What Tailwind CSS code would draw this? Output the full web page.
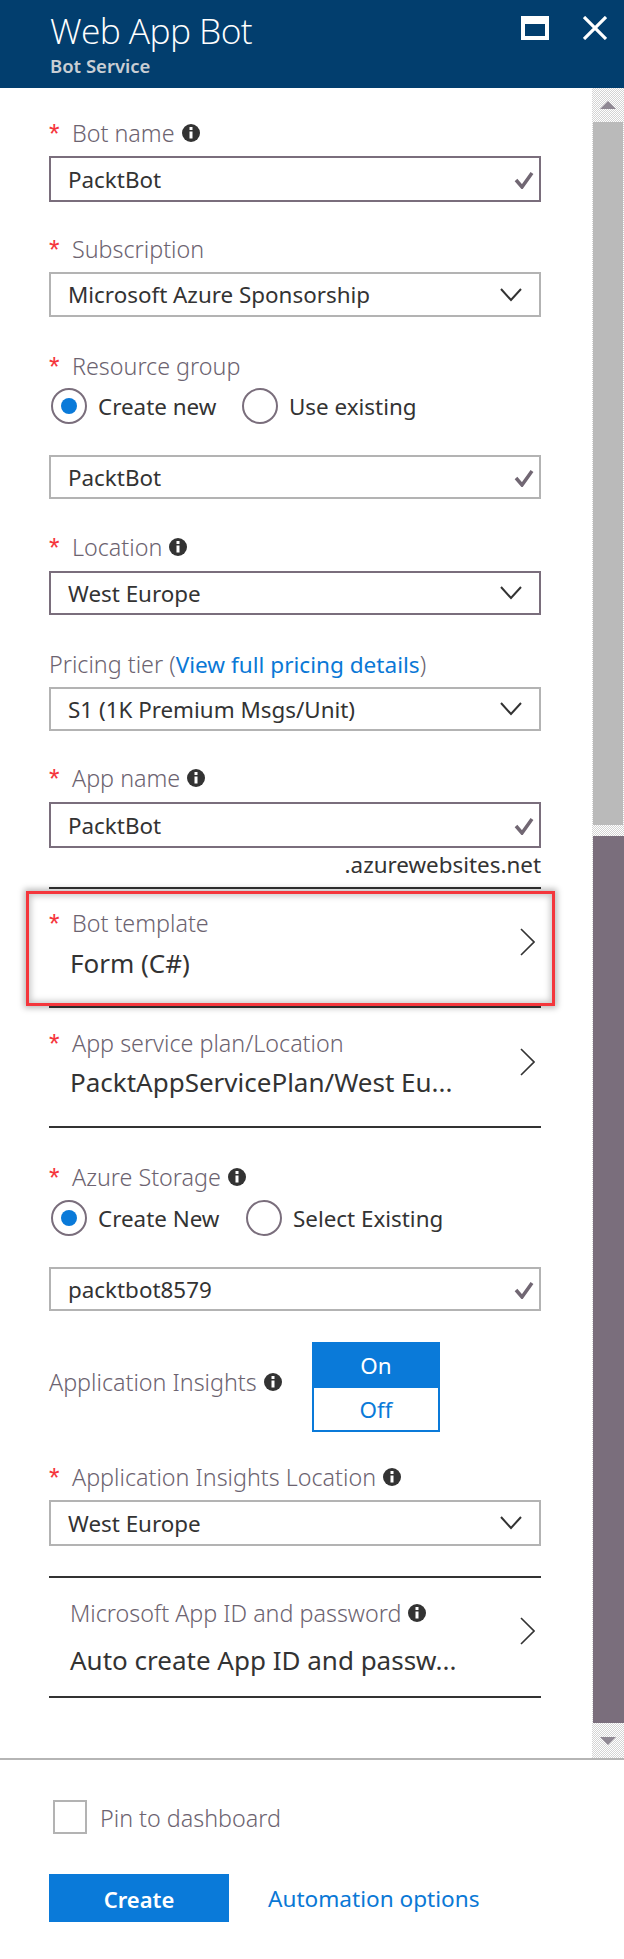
<!DOCTYPE html>
<html lang="en">
<head>
    <meta charset="UTF-8">
    <meta name="viewport" content="width=device-width, initial-scale=1.0">
    <title>Web App Bot</title>
    <script src="https://cdn.jsdelivr.net/npm/@tailwindcss/browser@4"></script>
</head>
<body class="bg-white font-['Noto_Sans',sans-serif] text-[22.4px] text-[#333]">
<div class="w-[624px] h-[1959px] flex flex-col overflow-hidden">

    <!-- Blade header -->
    <header class="h-[88px] shrink-0 bg-[#023e6e] flex items-start pl-[50px] relative">
        <div class="flex-1">
            <h1 class="h-[46px] mt-[7px] text-[35.4px] leading-[46px] font-light text-white font-['Open_Sans',sans-serif] tracking-[-0.6px]">Web App Bot</h1>
            <p class="h-[24px] mt-[1px] text-[18.5px] leading-[24px] font-semibold text-[#c9ced4]">Bot Service</p>
        </div>
        <div class="w-[28px] h-[24px] mt-[16px] border-x-4 border-b-4 border-t-8 border-white"></div>
        <svg class="w-[24px] h-[24px] mt-[16px] ml-[34px] mr-[17px]" viewBox="0 0 24 24"><path d="M1 1L23 23M23 1L1 23" stroke="#fff" stroke-width="3.2" fill="none"/></svg>
    </header>

    <div class="h-[1670px] shrink-0 flex">
        <!-- Form -->
        <main class="w-[492px] ml-[49px] pt-[31px]">

            <!-- Bot name -->
            <div class="h-[30px] flex items-center">
                <span class="w-[23px] h-[30px] text-[27px] leading-[30px] text-[#f5353b] font-['Liberation_Sans',sans-serif]">*</span>
                <span class="pb-[1px] text-[23.3px] font-light text-[#6c6370]">Bot name</span>
                <svg class="w-[18px] h-[18px] ml-[7px] -mt-[2px]" viewBox="0 0 18 18"><circle cx="9" cy="9" r="9" fill="#333"/><rect x="7.5" y="3" width="3" height="3" fill="#fff"/><rect x="7.5" y="7.5" width="3" height="7" fill="#fff"/></svg>
            </div>
            <div class="mt-[7px] h-[46px] border-2 border-[#7a6e7c] flex items-center justify-between pl-[17px] pr-[5px]">
                <span class="pt-[1px]">PacktBot</span>
                <svg class="w-[20px] h-[18px] mt-[2px]" viewBox="0 0 20 18"><path d="M2 9L8 16L18 2" stroke="#716773" stroke-width="3.5" fill="none"/></svg>
            </div>

            <!-- Subscription -->
            <div class="mt-[33px] h-[30px] flex items-center">
                <span class="w-[23px] h-[30px] text-[27px] leading-[30px] text-[#f5353b] font-['Liberation_Sans',sans-serif]">*</span>
                <span class="pb-[1px] text-[23.3px] font-light text-[#6c6370]">Subscription</span>
            </div>
            <div class="mt-[7px] h-[45px] border-2 border-[#b3b3b3] flex items-center justify-between pl-[17px] pr-[17px]">
                <span class="pt-[1px]">Microsoft Azure Sponsorship</span>
                <svg class="w-[22px] h-[14px]" viewBox="0 0 22 14"><path d="M1 1L11 12L21 1" stroke="#333" stroke-width="2" fill="none"/></svg>
            </div>

            <!-- Resource group -->
            <div class="mt-[35px] h-[30px] flex items-center">
                <span class="w-[23px] h-[30px] text-[27px] leading-[30px] text-[#f5353b] font-['Liberation_Sans',sans-serif]">*</span>
                <span class="pb-[1px] text-[23.3px] font-light text-[#6c6370]">Resource group</span>
            </div>
            <div class="mt-[6px] h-[36px] flex items-center pl-[2px]">
                <span class="w-[36px] h-[36px] rounded-full border-2 border-[#7a6e7c] flex items-center justify-center"><span class="w-[16px] h-[16px] rounded-full bg-[#0a7ad9]"></span></span>
                <span class="w-[155px] pl-[11px] pt-[1px]">Create new</span>
                <span class="w-[36px] h-[36px] rounded-full border-2 border-[#7a6e7c]"></span>
                <span class="pl-[11px] pt-[1px]">Use existing</span>
            </div>
            <div class="mt-[31px] h-[44px] border-2 border-[#b3b3b3] flex items-center justify-between pl-[17px] pr-[5px]">
                <span class="pt-[1px]">PacktBot</span>
                <svg class="w-[20px] h-[18px] mt-[2px]" viewBox="0 0 20 18"><path d="M2 9L8 16L18 2" stroke="#716773" stroke-width="3.5" fill="none"/></svg>
            </div>

            <!-- Location -->
            <div class="mt-[34px] h-[30px] flex items-center">
                <span class="w-[23px] h-[30px] text-[27px] leading-[30px] text-[#f5353b] font-['Liberation_Sans',sans-serif]">*</span>
                <span class="pb-[1px] text-[23.3px] font-light text-[#6c6370]">Location</span>
                <svg class="w-[18px] h-[18px] ml-[7px] -mt-[2px]" viewBox="0 0 18 18"><circle cx="9" cy="9" r="9" fill="#333"/><rect x="7.5" y="3" width="3" height="3" fill="#fff"/><rect x="7.5" y="7.5" width="3" height="7" fill="#fff"/></svg>
            </div>
            <div class="mt-[8px] h-[44px] border-2 border-[#7a6e7c] flex items-center justify-between pl-[17px] pr-[17px]">
                <span class="pt-[1px]">West Europe</span>
                <svg class="w-[22px] h-[14px]" viewBox="0 0 22 14"><path d="M1 1L11 12L21 1" stroke="#333" stroke-width="2" fill="none"/></svg>
            </div>

            <!-- Pricing tier -->
            <div class="mt-[35px] h-[30px] flex items-center text-[23.3px] font-light text-[#6c6370]">
                <span class="pb-[1px]">Pricing tier (<a class="text-[22.6px] font-normal text-[#0a78d6]">View full pricing details</a>)</span>
            </div>
            <div class="mt-[7px] h-[44px] border-2 border-[#b3b3b3] flex items-center justify-between pl-[17px] pr-[17px]">
                <span class="pt-[1px]">S1 (1K Premium Msgs/Unit)</span>
                <svg class="w-[22px] h-[14px]" viewBox="0 0 22 14"><path d="M1 1L11 12L21 1" stroke="#333" stroke-width="2" fill="none"/></svg>
            </div>

            <!-- App name -->
            <div class="mt-[33px] h-[30px] flex items-center">
                <span class="w-[23px] h-[30px] text-[27px] leading-[30px] text-[#f5353b] font-['Liberation_Sans',sans-serif]">*</span>
                <span class="pb-[1px] text-[23.3px] font-light text-[#6c6370]">App name</span>
                <svg class="w-[18px] h-[18px] ml-[7px] -mt-[2px]" viewBox="0 0 18 18"><circle cx="9" cy="9" r="9" fill="#333"/><rect x="7.5" y="3" width="3" height="3" fill="#fff"/><rect x="7.5" y="7.5" width="3" height="7" fill="#fff"/></svg>
            </div>
            <div class="mt-[8px] h-[46px] border-2 border-[#7a6e7c] flex items-center justify-between pl-[17px] pr-[5px]">
                <span class="pt-[1px]">PacktBot</span>
                <svg class="w-[20px] h-[18px] mt-[2px]" viewBox="0 0 20 18"><path d="M2 9L8 16L18 2" stroke="#716773" stroke-width="3.5" fill="none"/></svg>
            </div>
            <div class="mt-[2px] h-[30px] leading-[30px] text-right">.azurewebsites.net</div>
            <div class="mt-[7px] h-[2px] bg-[#333]"></div>

            <!-- Bot template -->
            <div class="relative h-[119px] border-b-2 border-[#333] flex justify-between">
                <div class="pt-[20px]">
                    <div class="h-[30px] flex items-center">
                        <span class="w-[23px] h-[30px] text-[27px] leading-[30px] text-[#f5353b] font-['Liberation_Sans',sans-serif]">*</span>
                        <span class="pb-[1px] text-[23.3px] font-light text-[#6c6370]">Bot template</span>
                    </div>
                    <div class="mt-[9px] h-[30px] pl-[21px] text-[26px] leading-[30px]">Form (C#)</div>
                </div>
                <svg class="w-[15px] h-[28px] mt-[39px] mr-[6px]" viewBox="0 0 15 28"><path d="M1 1L14 14L1 27" stroke="#333" stroke-width="1.6" fill="none"/></svg>
                <div class="absolute -left-[23px] top-[2px] w-[529px] h-[115px] border-[3px] border-[#f4363c] shadow-[0_0_6px_2px_rgba(0,0,0,0.28),inset_0_0_6px_2px_rgba(0,0,0,0.22)]"></div>
            </div>

            <!-- App service plan -->
            <div class="h-[120px] border-b-2 border-[#333] flex justify-between">
                <div class="pt-[21px]">
                    <div class="h-[30px] flex items-center">
                        <span class="w-[23px] h-[30px] text-[27px] leading-[30px] text-[#f5353b] font-['Liberation_Sans',sans-serif]">*</span>
                        <span class="pb-[1px] text-[23.3px] font-light text-[#6c6370]">App service plan/Location</span>
                    </div>
                    <div class="mt-[8px] h-[30px] pl-[21px] text-[26px] leading-[30px]">PacktAppServicePlan/West Eu...</div>
                </div>
                <svg class="w-[15px] h-[28px] mt-[40px] mr-[6px]" viewBox="0 0 15 28"><path d="M1 1L14 14L1 27" stroke="#333" stroke-width="1.6" fill="none"/></svg>
            </div>

            <!-- Azure Storage -->
            <div class="mt-[35px] h-[30px] flex items-center">
                <span class="w-[23px] h-[30px] text-[27px] leading-[30px] text-[#f5353b] font-['Liberation_Sans',sans-serif]">*</span>
                <span class="pb-[1px] text-[23.3px] font-light text-[#6c6370]">Azure Storage</span>
                <svg class="w-[18px] h-[18px] ml-[7px] -mt-[2px]" viewBox="0 0 18 18"><circle cx="9" cy="9" r="9" fill="#333"/><rect x="7.5" y="3" width="3" height="3" fill="#fff"/><rect x="7.5" y="7.5" width="3" height="7" fill="#fff"/></svg>
            </div>
            <div class="mt-[7px] h-[36px] flex items-center pl-[2px]">
                <span class="w-[36px] h-[36px] rounded-full border-2 border-[#7a6e7c] flex items-center justify-center"><span class="w-[16px] h-[16px] rounded-full bg-[#0a7ad9]"></span></span>
                <span class="w-[159px] pl-[11px] pt-[2px]">Create New</span>
                <span class="w-[36px] h-[36px] rounded-full border-2 border-[#7a6e7c]"></span>
                <span class="pl-[11px] pt-[2px]">Select Existing</span>
            </div>
            <div class="mt-[31px] h-[44px] border-2 border-[#b3b3b3] flex items-center justify-between pl-[17px] pr-[5px]">
                <span class="pt-[1px]">packtbot8579</span>
                <svg class="w-[20px] h-[18px] mt-[2px]" viewBox="0 0 20 18"><path d="M2 9L8 16L18 2" stroke="#716773" stroke-width="3.5" fill="none"/></svg>
            </div>

            <!-- Application Insights -->
            <div class="mt-[31px] h-[90px] flex items-start">
                <div class="w-[263px] mt-[26px] h-[30px] flex items-center">
                    <span class="pb-[1px] text-[23.3px] font-light text-[#6c6370]">Application Insights</span>
                    <svg class="w-[18px] h-[18px] ml-[7px] -mt-[2px]" viewBox="0 0 18 18"><circle cx="9" cy="9" r="9" fill="#333"/><rect x="7.5" y="3" width="3" height="3" fill="#fff"/><rect x="7.5" y="7.5" width="3" height="7" fill="#fff"/></svg>
                </div>
                <div class="w-[128px] h-[90px] border-2 border-[#0a7ad9] flex flex-col text-center">
                    <div class="h-[44px] leading-[44px] bg-[#0a7ad9] text-white">On</div>
                    <div class="flex-1 leading-[44px] text-[#0a7ad9]">Off</div>
                </div>
            </div>

            <!-- Application Insights Location -->
            <div class="mt-[31px] h-[30px] flex items-center">
                <span class="w-[23px] h-[30px] text-[27px] leading-[30px] text-[#f5353b] font-['Liberation_Sans',sans-serif]">*</span>
                <span class="pb-[1px] text-[23.3px] font-light text-[#6c6370]">Application Insights Location</span>
                <svg class="w-[18px] h-[18px] ml-[7px] -mt-[2px]" viewBox="0 0 18 18"><circle cx="9" cy="9" r="9" fill="#333"/><rect x="7.5" y="3" width="3" height="3" fill="#fff"/><rect x="7.5" y="7.5" width="3" height="7" fill="#fff"/></svg>
            </div>
            <div class="mt-[7px] h-[46px] border-2 border-[#b3b3b3] flex items-center justify-between pl-[17px] pr-[17px]">
                <span class="pt-[1px]">West Europe</span>
                <svg class="w-[22px] h-[14px]" viewBox="0 0 22 14"><path d="M1 1L11 12L21 1" stroke="#333" stroke-width="2" fill="none"/></svg>
            </div>
            <div class="mt-[30px] h-[2px] bg-[#333]"></div>

            <!-- App ID -->
            <div class="h-[120px] border-b-2 border-[#333] flex justify-between">
                <div class="pt-[21px] pl-[21px]">
                    <div class="h-[30px] flex items-center">
                        <span class="pb-[1px] text-[23.3px] font-light text-[#6c6370]">Microsoft App ID and password</span>
                        <svg class="w-[18px] h-[18px] ml-[7px] -mt-[2px]" viewBox="0 0 18 18"><circle cx="9" cy="9" r="9" fill="#333"/><rect x="7.5" y="3" width="3" height="3" fill="#fff"/><rect x="7.5" y="7.5" width="3" height="7" fill="#fff"/></svg>
                    </div>
                    <div class="mt-[16px] h-[30px] text-[26px] leading-[30px]">Auto create App ID and passw...</div>
                </div>
                <svg class="w-[15px] h-[28px] mt-[39px] mr-[6px]" viewBox="0 0 15 28"><path d="M1 1L14 14L1 27" stroke="#333" stroke-width="1.6" fill="none"/></svg>
            </div>
        </main>

        <!-- Scrollbar -->
        <div class="w-[32px] ml-[51px] flex flex-col bg-[repeating-conic-gradient(#d4d4d4_0_25%,#fff_0_50%)] bg-[length:2px_2px]">
            <div class="h-[34px] flex items-center justify-center">
                <svg class="w-[16px] h-[8px]" viewBox="0 0 16 8"><path d="M8 0L16 8H0Z" fill="#8f8893"/></svg>
            </div>
            <div class="h-[703px] ml-[1px] mr-[1px] bg-[#bababa]"></div>
            <div class="h-[11px]"></div>
            <div class="h-[887px] ml-[1px] bg-[#7a6e7c]"></div>
            <div class="flex-1 flex items-center justify-center">
                <svg class="w-[16px] h-[8px]" viewBox="0 0 16 8"><path d="M0 0H16L8 8Z" fill="#8f8893"/></svg>
            </div>
        </div>
    </div>

    <!-- Footer -->
    <footer class="flex-1 border-t-2 border-[#b5b5b5] pl-[49px]">
        <div class="mt-[40px] h-[34px] flex items-center pl-[4px]">
            <span class="w-[34px] h-[34px] border-2 border-[#b3b3b3]"></span>
            <span class="pl-[13px] pt-[2px] text-[23.3px] font-light text-[#6c6370]">Pin to dashboard</span>
        </div>
        <div class="mt-[40px] flex items-center">
            <button class="w-[180px] h-[48px] pt-[2px] bg-[#0a7ad9] text-[22px] text-white font-semibold">Create</button>
            <a class="ml-[39px] pt-[2px] text-[22.6px] text-[#0a78d6]">Automation options</a>
        </div>
    </footer>
</div>
</body>
</html>
